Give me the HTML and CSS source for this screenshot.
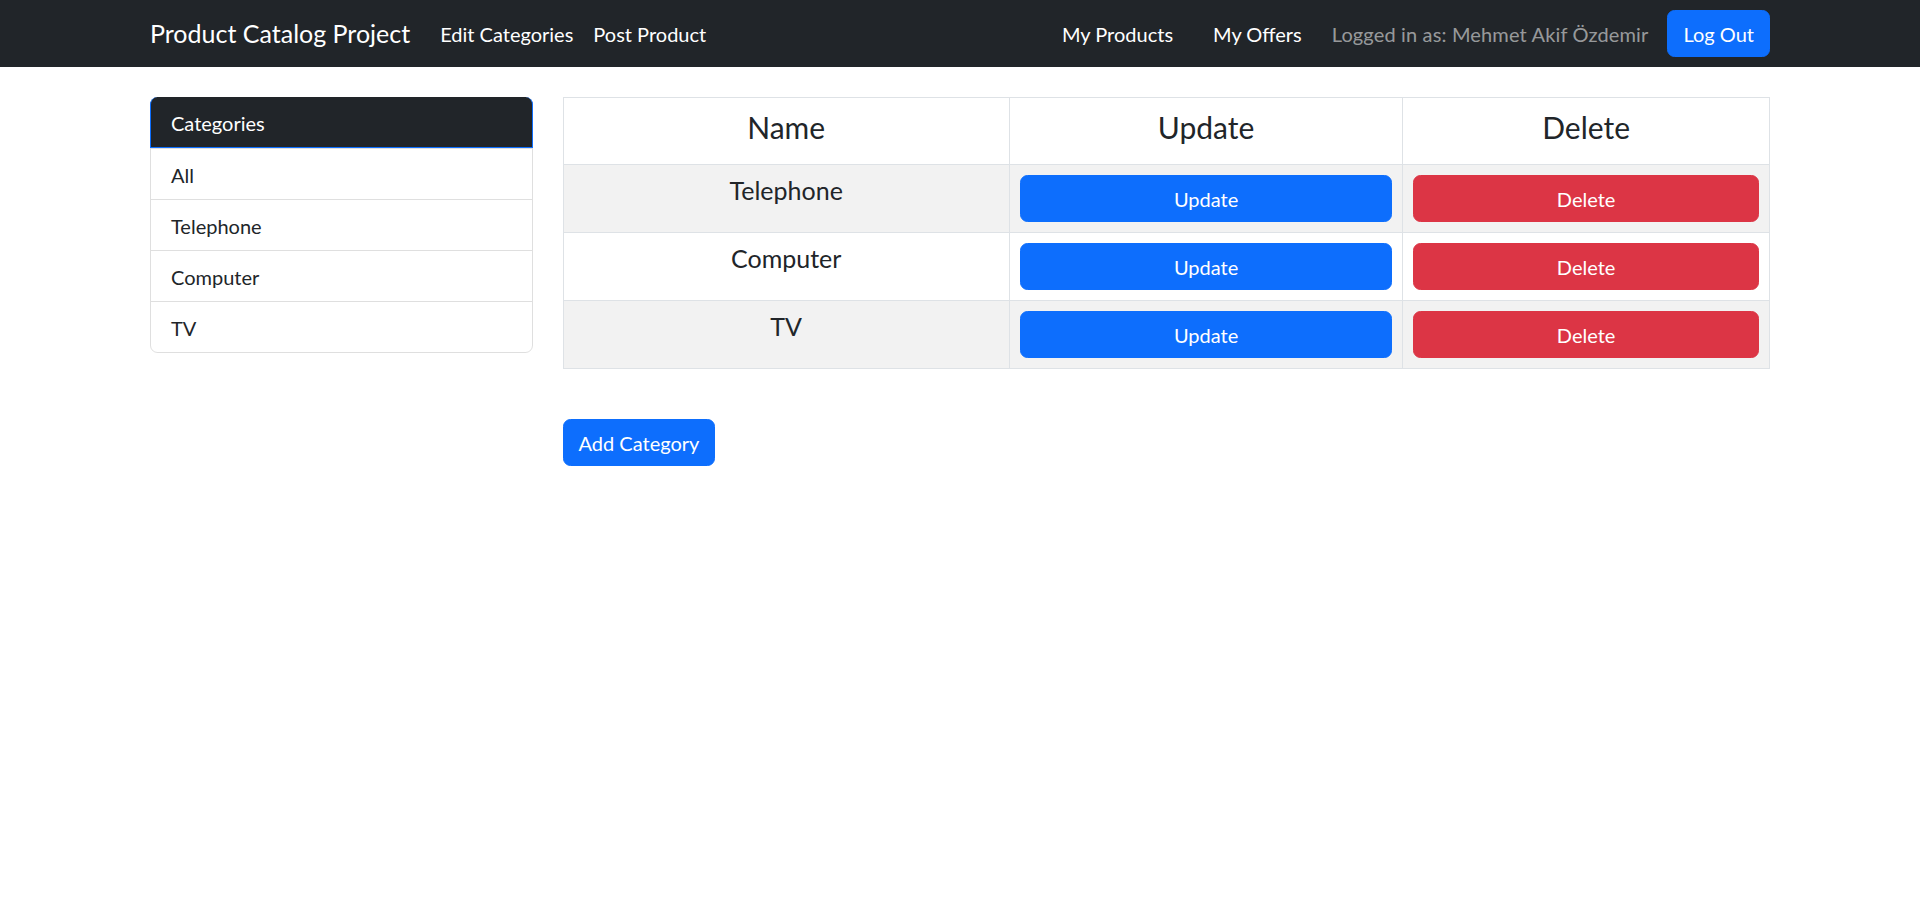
FILE: index.html
```html
<!DOCTYPE html>
<html lang="en">
<head>
<meta charset="utf-8">
<title>Product Catalog Project</title>
<link rel="stylesheet" href="styles.css">
</head>
<body>
<nav class="navbar">
  <div class="container nav-inner">
    <a class="brand" href="#">Product Catalog Project</a>
    <div class="nav-left">
      <a class="nav-link" href="#">Edit Categories</a>
      <a class="nav-link" href="#">Post Product</a>
    </div>
    <div class="nav-right">
      <a class="nav-link nav-gap" href="#">My Products</a>
      <a class="nav-link" href="#">My Offers</a>
      <span class="nav-text">Logged in as: Mehmet Akif Özdemir</span>
      <button class="btn btn-primary btn-logout">Log Out</button>
    </div>
  </div>
</nav>
<main class="container content">
  <aside class="sidebar">
    <ul class="list-group">
      <li class="list-item list-head">Categories</li>
      <li class="list-item">All</li>
      <li class="list-item">Telephone</li>
      <li class="list-item">Computer</li>
      <li class="list-item">TV</li>
    </ul>
  </aside>
  <section class="main-col">
    <table class="table">
      <colgroup>
        <col class="col-name">
        <col class="col-update">
        <col class="col-delete">
      </colgroup>
      <thead>
        <tr><th>Name</th><th>Update</th><th>Delete</th></tr>
      </thead>
      <tbody>
        <tr class="striped"><td>Telephone</td><td class="cell-btn"><button class="btn btn-primary btn-block">Update</button></td><td class="cell-btn"><button class="btn btn-danger btn-block">Delete</button></td></tr>
        <tr><td>Computer</td><td class="cell-btn"><button class="btn btn-primary btn-block">Update</button></td><td class="cell-btn"><button class="btn btn-danger btn-block">Delete</button></td></tr>
        <tr class="striped"><td>TV</td><td class="cell-btn"><button class="btn btn-primary btn-block">Update</button></td><td class="cell-btn"><button class="btn btn-danger btn-block">Delete</button></td></tr>
      </tbody>
    </table>
    <button class="btn btn-primary btn-add">Add Category</button>
  </section>
</main>
</body>
</html>
```
FILE: styles.css
```css
* { box-sizing: border-box; }
html, body { margin: 0; padding: 0; }
body {
  font-family: Lato, "Open Sans", sans-serif;
  font-size: 20px;
  line-height: 1.5;
  color: #212529;
  background: #fff;
}
.container {
  max-width: 1650px;
  margin: 0 auto;
  padding: 0 15px;
}
.navbar {
  background: #212529;
  height: 67px;
}
.nav-inner {
  display: flex;
  align-items: center;
  height: 67px;
}
.brand {
  font-size: 25px;
  color: #fff;
  text-decoration: none;
  margin-right: 20px;
  line-height: 37px;
}
.nav-left, .nav-right { display: flex; align-items: center; }
.nav-right { margin-left: auto; }
.nav-link {
  color: #fff;
  text-decoration: none;
  padding: 10px 10px;
  line-height: 30px;
}
.nav-gap { margin-right: 20px; }
.nav-text {
  color: rgba(255,255,255,.55);
  margin-left: 20px;
  line-height: 30px;
  letter-spacing: 0.15px;
}
.btn {
  font-family: inherit;
  font-size: 20px;
  line-height: 30px;
  padding: 7.5px 15px;
  border: 1px solid transparent;
  border-radius: 7.5px;
  color: #fff;
  cursor: pointer;
}
.btn-primary { background: #0d6efd; border-color: #0d6efd; }
.btn-danger { background: #dc3545; border-color: #dc3545; }
.btn-logout { margin-left: 19px; }
.btn-block { display: block; width: 100%; }
.content {
  display: flex;
  gap: 30px;
  margin-top: 30px;
}
.sidebar { flex: 0 0 382.5px; }
.main-col { flex: 1; }
.list-group {
  list-style: none;
  margin: 0;
  padding: 0;
  border: 1px solid rgba(0,0,0,.125);
  border-radius: 7.5px;
}
.list-item {
  padding: 11px 20px 9px;
  line-height: 30px;
  border-top: 1px solid rgba(0,0,0,.125);
}
.list-item:first-child { border-top: 0; }
.list-head {
  background: #212529;
  color: #fff;
  margin: -1px -1px 0;
  border: 1px solid #0d6efd;
  border-radius: 7.5px 7.5px 0 0;
}
.table {
  width: 100%;
  border-collapse: collapse;
  border: 1px solid #dee2e6;
  margin-bottom: 20px;
}
.col-name { width: 37%; }
.col-update { width: 32.6%; }
.col-delete { width: 30.4%; }
.table th, .table td {
  border: 1px solid #dee2e6;
  padding: 7px 10px 13px;
  text-align: center;
  vertical-align: top;
}
.table th {
  font-size: 30px;
  font-weight: 400;
  line-height: 46px;
  padding: 6px 10px 14px;
}
.table td {
  font-size: 25px;
  line-height: 37.5px;
}
.table td.cell-btn { padding: 10px; }
.striped td { background: #f2f2f2; }
.btn-add { margin-top: 30px; }
```
